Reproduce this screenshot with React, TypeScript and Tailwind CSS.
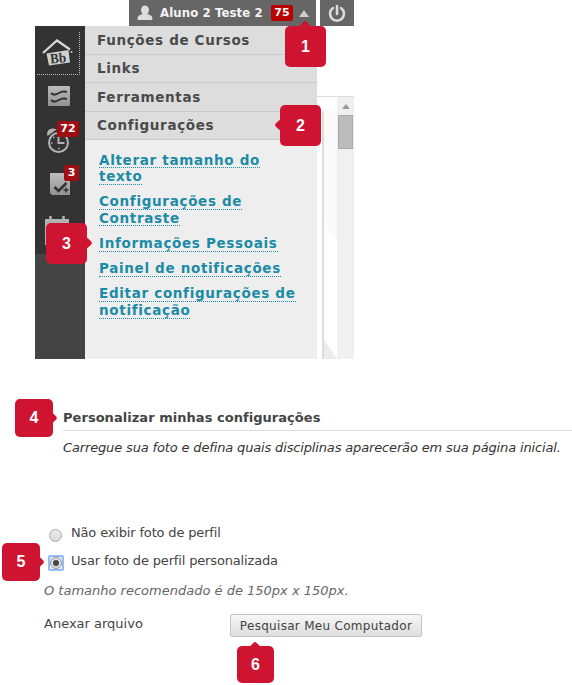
import type { ReactNode } from 'react';

const verdana = "font-['DejaVu_Sans',sans-serif] [font-stretch:normal]";
const tahoma = "font-['DejaVu_Sans_Condensed','DejaVu_Sans',sans-serif] [font-stretch:condensed]";

const menu = ['Funções de Cursos', 'Links', 'Ferramentas', 'Configurações'];

const links = [
  ['Alterar tamanho do', 'texto'],
  ['Configurações de', 'Contraste'],
  ['Informações Pessoais'],
  ['Painel de notificações'],
  ['Editar configurações de', 'notificação'],
];

function Marker({ n, place, size, tip }: { n: number; place: string; size: string; tip: string }) {
  return (
    <div className={`absolute z-10 flex items-center justify-center rounded-[5px] bg-[#ce1430] font-['Liberation_Sans',sans-serif] font-bold text-white ${size} ${place}`}>
      <span className={`absolute size-[8px] rotate-45 rounded-[2px] bg-[#ce1430] ${tip}`} />
      <span className="relative">{n}</span>
    </div>
  );
}

function Count({ children, place }: { children: ReactNode; place: string }) {
  return (
    <span className={`absolute flex h-[16px] items-center justify-center rounded-[2px] bg-[#a00d12] text-[11px] font-bold text-white ${verdana} ${place}`}>
      {children}
    </span>
  );
}

function Sidebar() {
  return (
    <div className="relative h-[333px] w-[50px] shrink-0 bg-[#444]">
      <div className="h-[228px] bg-[#333]">
        <svg width="50" height="228" viewBox="0 0 50 228" fill="none">
          <path d="M2 48.5H44.5V5" stroke="#bbb" strokeDasharray="1 1" />
          <path d="M8 27 22 14.500 35 23.500" stroke="#d8d8d8" strokeWidth="2.200" />
          <path d="m11.500 27.500 22-3.500 1.500 12.500L14 39.500z" fill="#cfcfcf" />
          <circle cx="36.500" cy="26" r="1" fill="#ccc" />
          <text x="15" y="37" transform="rotate(-5 22 31)" fill="#333" fontSize="14" fontWeight="bold" fontFamily="Liberation Serif, serif" textLength="16" lengthAdjust="spacingAndGlyphs">Bb</text>
          <defs>
            <linearGradient id="metal" x1="0" y1="0" x2="0" y2="1">
              <stop stopColor="#bdbdbd" />
              <stop offset="1" stopColor="#929292" />
            </linearGradient>
          </defs>
          <rect x="13" y="60" width="22" height="20" rx="1" fill="url(#metal)" />
          <path d="M16 67c2 2 5 2 8 0s5-2 8-1M16 74c2 2 5 2 8 0s5-2 8-1" stroke="#333" strokeWidth="2" />
          <circle cx="23.500" cy="116.500" r="9.500" stroke="#b2b2b2" strokeWidth="2" />
          <path d="M23.500 110.500v6.500h6" stroke="#b2b2b2" strokeWidth="2" />
          <path d="M12.500 110c-2-6 4-9.500 9-6.500z" fill="#b2b2b2" />
          <path d="M16 117h1.500M23 122.500h1.500M18 111.500h1.500" stroke="#b2b2b2" strokeWidth="1.500" />
          <path d="M15 147h20v22H17l-2-2z" fill="url(#metal)" />
          <path d="m19.500 161 4 4 8-8" stroke="#333" strokeWidth="2.500" />
          <path d="M31 161.500v5m-2.500-2.500h5" stroke="#333" strokeWidth="1.500" />
          <path d="M10 193h24v26H10z" fill="#b2b2b2" />
          <path d="M13 200h18v16H13z" fill="#444" />
          <path d="M15.500 190v5M28.500 190v5" stroke="#b2b2b2" strokeWidth="2.500" />
        </svg>
      </div>
      <Count place="left-[22px] top-[95px] w-[22px]">72</Count>
      <Count place="left-[29px] top-[139px] w-[15px]">3</Count>
    </div>
  );
}

function Dropdown() {
  return (
    <div className={`h-[333px] w-[232px] shrink-0 bg-[#eee] font-bold ${verdana}`}>
      {menu.map((label) => (
        <div key={label} className="flex h-[28.500px] items-center border-b border-[#cbcbcb] bg-[#ddd] pl-[12px] text-[13.500px] tracking-[0.650px] text-[#4a4a4a]">
          {label}
        </div>
      ))}
      <div className="flex flex-col gap-[8.600px] pl-[14px] pt-[11.500px] text-[13.500px] leading-[16px] tracking-[0.680px] text-[#1c8ba5]">
        {links.map((lines) => (
          <div key={lines[0]}>
            {lines.map((line) => (
              <div key={line} className="h-[16.600px] w-fit whitespace-nowrap border-b border-dotted border-[#1c8ba5]">
                {line}
              </div>
            ))}
          </div>
        ))}
      </div>
    </div>
  );
}

function Backdrop() {
  return (
    <div className="flex h-[333px] flex-1 flex-col bg-white pt-[70px]">
      <div className="flex flex-1 border-t border-[#ddd]">
        <div className="w-[20px] pl-[5px] pt-[14px]">
          <div className="h-full overflow-hidden rounded-tr border-l-2 border-[#ddd]">
            <svg width="13" height="248" viewBox="0 0 13 248">
              <path d="M0 0H13V130Q3 120 0 105z" fill="#fafafa" />
              <path d="M0 229l13 19H0z" fill="#ececec" />
            </svg>
          </div>
        </div>
        <div className="flex flex-1 flex-col items-center bg-[#f0f0f0] pt-[7px]">
          <svg width="8" height="5"><path d="M0 5 4 0l4 5z" fill="#999" /></svg>
          <div className="mt-[6px] h-[34px] w-[15px] border border-[#aaa] bg-[#bcbcbc]" />
        </div>
      </div>
    </div>
  );
}

export default function App() {
  return (
    <div className={`relative h-[685px] w-[572px] overflow-hidden bg-white text-[#444] ${verdana}`}>
      <header className="ml-[129px] flex h-[26px] gap-[4px]">
        <div className={`flex w-[187px] items-center bg-[#666] text-[13px] font-bold text-[#f4f4f4] ${tahoma}`}>
          <svg className="ml-[8px]" width="16" height="16" viewBox="0 0 16 16" fill="#ddd">
            <ellipse cx="8" cy="5" rx="4" ry="4.500" />
            <path d="M0.500 14c0-4 4-4.500 5-5h5c1 .5 5 1 5 5 0 1-1 1-2 1H2.500c-1 0-2 0-2-1z" />
          </svg>
          <span className="ml-[7px] w-[104px] whitespace-nowrap tracking-[0.130px]">Aluno 2 Teste 2</span>
          <span className={`ml-[7px] flex h-[16px] w-[22px] items-center justify-center rounded-[2px] bg-[#b80000] text-[11px] ${verdana}`}>75</span>
          <svg className="ml-[6px]" width="10" height="7"><path d="M0 7 5 0l5 7z" fill="#ccc" /></svg>
        </div>
        <div className="flex w-[34px] items-center justify-center bg-[#666]">
          <svg width="18" height="19" viewBox="0 0 18 19" fill="none" stroke="#ddd" strokeWidth="2.500" strokeLinecap="round">
            <path d="M5 4a7 7 0 1 0 8 0M9 2v8" />
          </svg>
        </div>
      </header>

      <section className="ml-[35px] flex h-[333px] w-[319px]">
        <Sidebar />
        <Dropdown />
        <Backdrop />
      </section>

      <section className="ml-[63px] pt-[48px]">
        <h2 className="h-[24px] border-b border-[#ddd] pt-[2px] text-[13px] font-bold leading-[18px] tracking-[0.040px]">Personalizar minhas configurações</h2>
        <p className="mt-[8px] whitespace-nowrap text-[13px] italic leading-[18px] tracking-[-0.150px] text-[#333]">
          Carregue sua foto e defina quais disciplinas aparecerão em sua página inicial.
        </p>
      </section>

      <section className="ml-[44px] pt-[67px] text-[13px] leading-[18px] tracking-[-0.160px]">
        <div className="flex h-[28px] items-start">
          <span className="ml-[5px] mt-[5px] size-[13px] rounded-full border border-[#aaa] bg-linear-to-b from-[#ececec] to-[#d8d8d8]" />
          <span className="ml-[9px]">Não exibir foto de perfil</span>
        </div>
        <div className="flex h-[28px] items-start">
          <span className="ml-[4px] mt-[3px] flex size-[16px] items-center justify-center rounded-[2px] border-2 border-[#92baf4] bg-[#e6edf6]">
            <span className="flex size-[12px] shrink-0 items-center justify-center rounded-full border border-[#999] bg-[#ddd]">
              <span className="size-[6px] rounded-full bg-[#444]" />
            </span>
          </span>
          <span className="ml-[7px]">Usar foto de perfil personalizada</span>
        </div>
        <p className="pt-[2px] italic tracking-normal text-[#666]">O tamanho recomendado é de 150px x 150px.</p>
        <div className="mt-[13px] flex items-start">
          <span className="w-[186px] pt-[2px] tracking-normal">Anexar arquivo</span>
          <button className="mt-[1px] flex h-[23px] w-[192px] items-center justify-center whitespace-nowrap rounded-[2px] border border-[#c4c4c4] bg-linear-to-b from-[#f7f7f7] to-[#dedede] pt-px text-[12px] tracking-[0.300px]">
            Pesquisar Meu Computador
          </button>
        </div>
      </section>

      <Marker n={1} place="left-[285px] top-[26px]" size="size-[41px] text-[16px]" tip="left-[16px] top-[-4px]" />
      <Marker n={2} place="left-[280px] top-[105px]" size="size-[41px] text-[16px]" tip="left-[-4px] top-[16px]" />
      <Marker n={3} place="left-[46px] top-[223px]" size="size-[41px] text-[16px]" tip="right-[-4px] top-[16px]" />
      <Marker n={4} place="left-[15px] top-[399px]" size="size-[38px] text-[16px]" tip="right-[-3px] top-[15px]" />
      <Marker n={5} place="left-[2px] top-[543px]" size="size-[38px] text-[16px]" tip="right-[-3px] top-[15px]" />
      <Marker n={6} place="left-[237px] top-[646px]" size="size-[37px] text-[16px]" tip="left-[14px] top-[-3px]" />
    </div>
  );
}
